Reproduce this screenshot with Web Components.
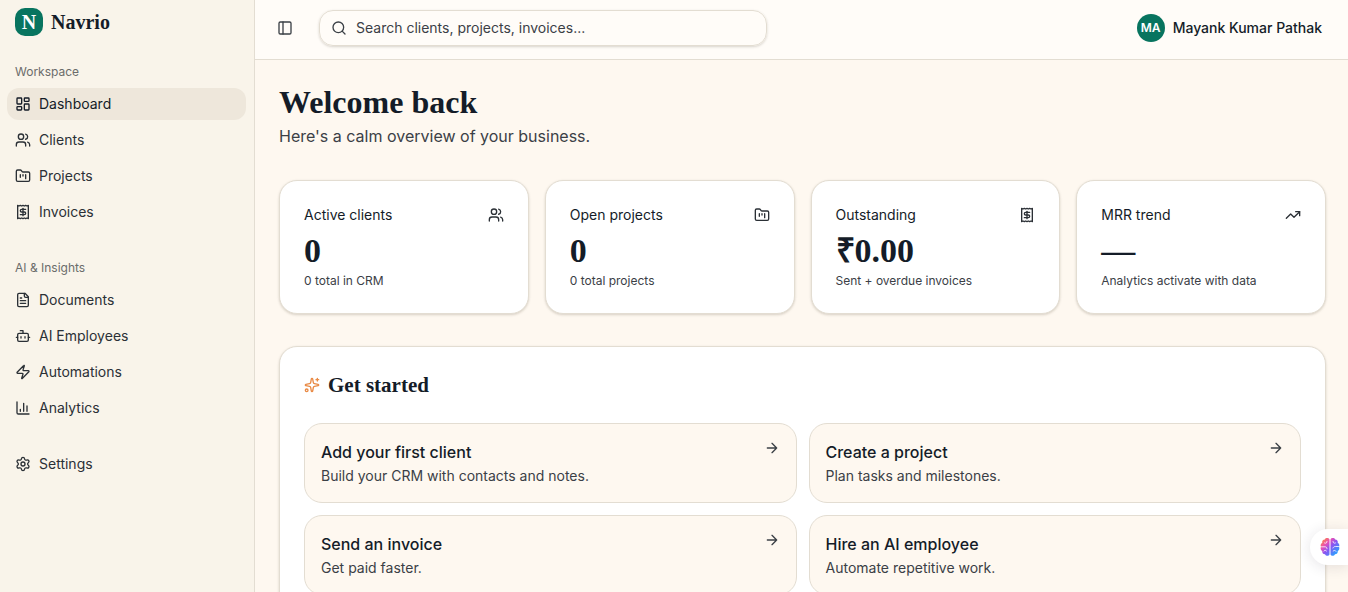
<!DOCTYPE html>
<html lang="en">
<head>
<meta charset="utf-8">
<meta name="viewport" content="width=device-width, initial-scale=1">
<title>Navrio – Dashboard</title>
<style>
  :root {
    --ink: #141c28;
    --ink-soft: #3b4046;
    --muted: #6b6c6b;
    --brand: #08745f;
    --line: #e3ddd2;
    --page: #fef8f0;
    --sidebar: #f9f4ea;
    --active: #eee7db;
    --header: #fffcf8;
    --accent: #e98a45;
    --serif: "Liberation Serif", serif;
    --shadow: 0 1px 3px rgba(60, 50, 30, .12), 0 1px 2px rgba(60, 50, 30, .08);
  }
  body {
    margin: 0;
    color: var(--ink);
    background: var(--page);
    font: 14px/20px Inter, sans-serif;
  }
</style>
</head>
<body>
<app-shell>
  <side-bar slot="sidebar">
    <nav-group label="Workspace">
      <nav-item icon="dashboard" active>Dashboard</nav-item>
      <nav-item icon="users">Clients</nav-item>
      <nav-item icon="folder">Projects</nav-item>
      <nav-item icon="receipt">Invoices</nav-item>
    </nav-group>
    <nav-group label="AI &amp; Insights">
      <nav-item icon="file">Documents</nav-item>
      <nav-item icon="bot">AI Employees</nav-item>
      <nav-item icon="zap">Automations</nav-item>
      <nav-item icon="chart">Analytics</nav-item>
    </nav-group>
    <nav-group>
      <nav-item icon="settings">Settings</nav-item>
    </nav-group>
  </side-bar>
  <top-bar slot="header" initials="MA">Mayank Kumar Pathak</top-bar>
  <page-heading>
    Welcome back
    <span slot="sub">Here's a calm overview of your business.</span>
  </page-heading>
  <stat-grid>
    <stat-card icon="users" label="Active clients" value="0">0 total in CRM</stat-card>
    <stat-card icon="folder" label="Open projects" value="0">0 total projects</stat-card>
    <stat-card icon="receipt" label="Outstanding" value="₹0.00">Sent + overdue invoices</stat-card>
    <stat-card icon="trend" label="MRR trend" value="—">Analytics activate with data</stat-card>
  </stat-grid>
  <start-panel label="Get started">
    <action-card label="Add your first client">Build your CRM with contacts and notes.</action-card>
    <action-card label="Create a project">Plan tasks and milestones.</action-card>
    <action-card label="Send an invoice">Get paid faster.</action-card>
    <action-card label="Hire an AI employee">Automate repetitive work.</action-card>
  </start-panel>
</app-shell>
<assistant-tab></assistant-tab>

<script>
const ICONS = {
  dashboard: '<rect width="7" height="9" x="3" y="3" rx="1"/><rect width="7" height="5" x="14" y="3" rx="1"/><rect width="7" height="9" x="14" y="12" rx="1"/><rect width="7" height="5" x="3" y="16" rx="1"/>',
  users: '<path d="M16 21v-2a4 4 0 0 0-4-4H6a4 4 0 0 0-4 4v2"/><path d="M16 3.128a4 4 0 0 1 0 7.744"/><path d="M22 21v-2a4 4 0 0 0-3-3.87"/><circle cx="9" cy="7" r="4"/>',
  folder: '<path d="M4 20h16a2 2 0 0 0 2-2V8a2 2 0 0 0-2-2h-7.93a2 2 0 0 1-1.66-.9l-.82-1.2A2 2 0 0 0 7.93 3H4a2 2 0 0 0-2 2v13c0 1.1.9 2 2 2Z"/><path d="M8 10v4M12 10v2M16 10v6"/>',
  receipt: '<path d="M4 2v20l2-1 2 1 2-1 2 1 2-1 2 1 2-1 2 1V2l-2 1-2-1-2 1-2-1-2 1-2-1-2 1Z"/><path d="M16 8h-6a2 2 0 1 0 0 4h4a2 2 0 1 1 0 4H8"/><path d="M12 17.5v-11"/>',
  file: '<path d="M15 2H6a2 2 0 0 0-2 2v16a2 2 0 0 0 2 2h12a2 2 0 0 0 2-2V7Z"/><path d="M14 2v4a2 2 0 0 0 2 2h4"/><path d="M10 9H8M16 13H8M16 17H8"/>',
  bot: '<path d="M12 8V4H8"/><rect width="16" height="12" x="4" y="8" rx="2"/><path d="M2 14h2M20 14h2M15 13v2M9 13v2"/>',
  zap: '<path d="M4 14a1 1 0 0 1-.78-1.63l9.9-10.2a.5.5 0 0 1 .86.46l-1.92 6.02A1 1 0 0 0 13 10h7a1 1 0 0 1 .78 1.63l-9.9 10.2a.5.5 0 0 1-.86-.46l1.92-6.02A1 1 0 0 0 11 14z"/>',
  chart: '<path d="M3 3v16a2 2 0 0 0 2 2h16M18 17V9M13 17V5M8 17v-3"/>',
  settings: '<path d="M9.671 4.136a2.34 2.34 0 0 1 4.659 0 2.34 2.34 0 0 0 3.319 1.915 2.34 2.34 0 0 1 2.33 4.033 2.34 2.34 0 0 0 0 3.831 2.34 2.34 0 0 1-2.33 4.033 2.34 2.34 0 0 0-3.319 1.915 2.34 2.34 0 0 1-4.659 0 2.34 2.34 0 0 0-3.32-1.915 2.34 2.34 0 0 1-2.33-4.033 2.34 2.34 0 0 0 0-3.831A2.34 2.34 0 0 1 6.35 6.051a2.34 2.34 0 0 0 3.319-1.915"/><circle cx="12" cy="12" r="3"/>',
  panel: '<rect width="18" height="18" x="3" y="3" rx="2"/><path d="M9 3v18"/>',
  search: '<circle cx="11" cy="11" r="8"/><path d="m21 21-4.3-4.3"/>',
  trend: '<path d="M16 7h6v6"/><path d="m22 7-8.5 8.5-5-5L2 17"/>',
  arrow: '<path d="M5 12h14M12 5l7 7-7 7"/>',
  sparkles: '<path d="M11.017 2.814a1 1 0 0 1 1.966 0l1.051 5.558a2 2 0 0 0 1.594 1.594l5.558 1.051a1 1 0 0 1 0 1.966l-5.558 1.051a2 2 0 0 0-1.594 1.594l-1.051 5.558a1 1 0 0 1-1.966 0l-1.051-5.558a2 2 0 0 0-1.594-1.594l-5.558-1.051a1 1 0 0 1 0-1.966l5.558-1.051a2 2 0 0 0 1.594-1.594z"/><path d="M20 2v4M22 4h-4"/><circle cx="4" cy="20" r="2"/>'
};

/* Registers an element whose shadow root is built by render(element). */
function define(name, render) {
  customElements.define(name, class extends HTMLElement {
    connectedCallback() {
      if (this.shadowRoot) return;
      this.attachShadow({ mode: 'open' }).innerHTML = render(this);
    }
  });
}
const attr = (el, name) => (el.getAttribute(name) || '').replace(/&/g, '&amp;').replace(/</g, '&lt;');

define('line-icon', el => `
  <style>
    :host { display: block; flex: none; width: 16px; height: 16px; }
    svg { display: block; width: 100%; height: 100%; }
  </style>
  <svg viewBox="0 0 24 24" fill="none" stroke="currentColor" stroke-width="2" stroke-linecap="round" stroke-linejoin="round" aria-hidden="true">${ICONS[attr(el, 'name')]}</svg>`);

define('app-shell', () => `
  <style>
    :host { display: grid; grid-template-columns: 255px minmax(0, 1fr); height: 100vh; overflow: hidden; }
    .column { display: flex; flex-direction: column; min-height: 0; overflow: hidden; }
    main { flex: 1; min-height: 0; overflow: hidden; padding: 24px 22px 24px 24px; }
  </style>
  <slot name="sidebar"></slot>
  <div class="column"><slot name="header"></slot><main><slot></slot></main></div>`);

define('side-bar', () => `
  <style>
    :host { display: block; box-sizing: border-box; background: var(--sidebar); border-right: 1px solid var(--line); padding: 8px 8px 8px 7px; }
    .brand { display: flex; align-items: center; gap: 8px; padding: 0 8px; margin-bottom: 20px; color: var(--ink); text-decoration: none; font: bold 20px/28px var(--serif); }
    .mark { width: 28px; height: 28px; border-radius: 10px; background: var(--brand); color: #fff; text-align: center; }
    nav { display: grid; gap: 24px; }
  </style>
  <a class="brand" href="#"><span class="mark">N</span><span>Navrio</span></a>
  <nav><slot></slot></nav>`);

define('nav-group', el => `
  <style>
    :host { display: block; }
    h2 { margin: 0; padding: 0 8px; font: 12px/32px Inter, sans-serif; color: var(--muted); }
    .items { display: grid; gap: 4px; }
  </style>
  ${el.hasAttribute('label') ? `<h2>${attr(el, 'label')}</h2>` : ''}
  <div class="items"><slot></slot></div>`);

define('nav-item', el => `
  <style>
    :host { display: block; }
    a { display: flex; align-items: center; gap: 8px; height: 32px; padding: 0 8px; border-radius: 12px; color: #2b3036; text-decoration: none; }
    :host([active]) a { background: var(--active); color: var(--ink); }
  </style>
  <a href="#"><line-icon name="${attr(el, 'icon')}"></line-icon><span><slot></slot></span></a>`);

define('top-bar', el => `
  <style>
    :host { display: flex; align-items: flex-start; box-sizing: border-box; height: 60px; flex: none; padding: 10px 26px 0 16px; background: var(--header); border-bottom: 1px solid var(--line); }
    button { display: flex; align-items: center; border: 0; background: none; color: var(--ink-soft); font: inherit; }
    .toggle { width: 28px; height: 36px; justify-content: center; padding: 0; margin-right: 20px; }
    label { display: flex; align-items: center; gap: 9px; box-sizing: border-box; flex: 0 1 448px; height: 36px; padding: 0 11px; border: 1px solid var(--line); border-radius: 14px; box-shadow: var(--shadow); color: var(--ink-soft); }
    input { flex: 1; min-width: 0; padding: 0; border: 0; outline: 0; background: none; font: inherit; color: var(--ink); }
    input::placeholder { color: var(--ink-soft); opacity: 1; }
    .user { gap: 8px; height: 36px; margin-left: auto; padding: 0; color: var(--ink); font-weight: 500; }
    .avatar { width: 28px; border-radius: 50%; background: var(--brand); color: #fff; font: 600 12px/28px Inter, sans-serif; text-align: center; }
  </style>
  <button class="toggle" aria-label="Toggle sidebar"><line-icon name="panel"></line-icon></button>
  <label><line-icon name="search"></line-icon><input type="search" aria-label="Search" placeholder="Search clients, projects, invoices..."></label>
  <button class="user"><span class="avatar">${attr(el, 'initials')}</span><span><slot></slot></span></button>`);

define('page-heading', () => `
  <style>
    :host { display: block; margin-bottom: 32px; }
    h1 { margin: 0; font: bold 32px/36px var(--serif); color: var(--ink); }
    p { margin: 4px 0 0; font-size: 16px; line-height: 24px; color: var(--ink-soft); }
  </style>
  <h1><slot></slot></h1><p><slot name="sub"></slot></p>`);

define('stat-grid', () => `
  <style>
    :host { display: grid; grid-template-columns: repeat(4, minmax(0, 1fr)); gap: 16px; margin-bottom: 32px; }
  </style>
  <slot></slot>`);

define('stat-card', el => `
  <style>
    :host { display: block; padding: 24px; background: #fff; border: 1px solid var(--line); border-radius: 18px; box-shadow: var(--shadow); }
    header { display: flex; align-items: center; justify-content: space-between; color: #2b3036; }
    h2 { margin: 0; font: 400 14px/20px Inter, sans-serif; color: var(--ink); }
    .value { margin: 8px 0 4px; font: bold 34px/36px var(--serif); color: var(--ink); }
    .note { font-size: 12px; line-height: 16px; color: var(--ink-soft); }
  </style>
  <header><h2>${attr(el, 'label')}</h2><line-icon name="${attr(el, 'icon')}"></line-icon></header>
  <div class="value">${attr(el, 'value')}</div>
  <div class="note"><slot></slot></div>`);

define('start-panel', el => `
  <style>
    :host { display: block; padding: 24px; background: #fff; border: 1px solid var(--line); border-radius: 18px; box-shadow: var(--shadow); }
    header { display: flex; align-items: center; gap: 8px; margin-bottom: 24px; }
    h2 { margin: 0; font: bold 21px/28px var(--serif); color: var(--ink); }
    line-icon { color: var(--accent); }
    .grid { display: grid; grid-template-columns: repeat(2, minmax(0, 1fr)); gap: 12px; }
  </style>
  <header><line-icon name="sparkles"></line-icon><h2>${attr(el, 'label')}</h2></header>
  <div class="grid"><slot></slot></div>`);

define('action-card', el => `
  <style>
    :host { display: block; }
    a { display: flex; justify-content: space-between; align-items: flex-start; padding: 16px; border: 1px solid var(--line); border-radius: 18px; background: var(--page); text-decoration: none; color: var(--ink-soft); }
    h3 { margin: 0; font: 500 16px/24px Inter, sans-serif; color: var(--ink); }
    p { margin: 2px 0 0; line-height: 20px; }
  </style>
  <a href="#"><div><h3>${attr(el, 'label')}</h3><p><slot></slot></p></div><line-icon name="arrow"></line-icon></a>`);

define('assistant-tab', () => `
  <style>
    :host { position: fixed; right: 0; bottom: 27px; }
    button { display: flex; align-items: center; width: 38px; height: 36px; padding: 0 0 0 10px; border: 0; border-radius: 18px 0 0 18px; background: #fff; box-shadow: 0 2px 14px rgba(40, 30, 60, .12); }
    svg { display: block; width: 20px; height: 20px; }
  </style>
  <button aria-label="Open assistant">
    <svg viewBox="0 0 20 20" aria-hidden="true">
      <defs><linearGradient id="g" gradientUnits="userSpaceOnUse" x1="2" y1="2" x2="17" y2="17">
        <stop offset="0" stop-color="#ff8a3c"/><stop offset=".3" stop-color="#e84fb5"/><stop offset=".55" stop-color="#8a55f2"/><stop offset="1" stop-color="#25a5ff"/>
      </linearGradient></defs>
      <path fill="url(#g)" d="M9.500 2.500C8.600.7 5.600.6 4.800 2.500 3 2.500 1.800 4 2.300 5.700.8 6.500.2 8.300 1 9.700c-.8 1.500-.3 3.500 1.200 4.200-.2 2 1.100 3.300 2.800 3.300.9 2 3.700 2.200 4.500.2ZM10.500 2.500c.7-1.800 3.900-1.900 4.700 0 1.800 0 3 1.500 2.500 3.200 1.500.8 2.100 2.600 1.300 4 .8 1.500.3 3.500-1.200 4.200.2 2-1.100 3.300-2.800 3.300-.9 2-3.700 2.200-4.500.2Z"/>
      <path fill="none" stroke="#fff" stroke-width=".8" stroke-linecap="round" d="M4.500 6c1.500 1 2.500-.5 2.500-1.500M1.500 9.800h3.500c1.500 0 2 1 2 2M4 14c.5-1 1.700-1 2.500 0M15.500 6c-1.500 1-2.500-.5-2.500-1.500M18.500 9.500h-3c-1.500 0-2 .5-2.500 1.500M16 14.300c-.7-1.300-2-1-2.800-.3"/>
    </svg>
  </button>`);
</script>
</body>
</html>
